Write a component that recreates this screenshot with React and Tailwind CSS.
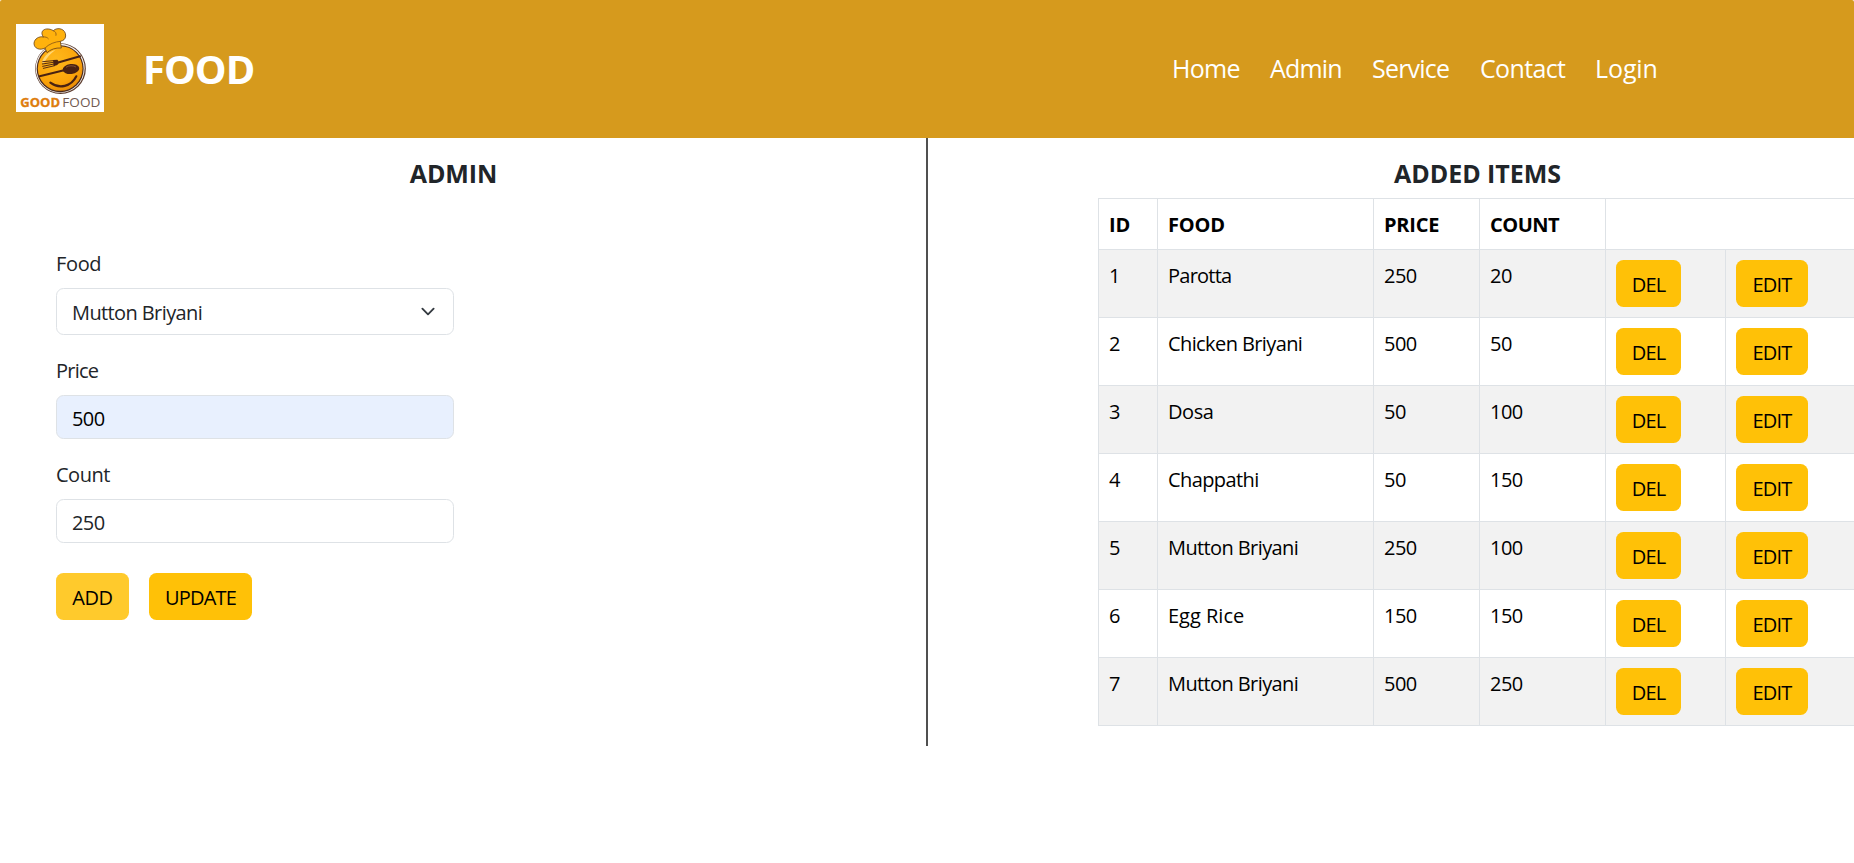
const navLinks = [
  { label: 'Home', box: 'w-[98px] tracking-[-0.7px]' },
  { label: 'Admin', box: 'w-[102px] tracking-[-0.8px]' },
  { label: 'Service', box: 'w-[108px] tracking-[-0.8px]' },
  { label: 'Contact', box: 'w-[115px] tracking-[-0.65px]' },
  { label: 'Login', box: 'w-[62px] tracking-[-0.1px]' },
];

const items = [
  { id: 1, food: 'Parotta', price: 250, count: 20, tracking: 'tracking-[-0.75px]' },
  { id: 2, food: 'Chicken Briyani', price: 500, count: 50, tracking: 'tracking-[-0.6px]' },
  { id: 3, food: 'Dosa', price: 50, count: 100, tracking: 'tracking-[-0.4px]' },
  { id: 4, food: 'Chappathi', price: 50, count: 150, tracking: 'tracking-[-0.6px]' },
  { id: 5, food: 'Mutton Briyani', price: 250, count: 100, tracking: 'tracking-[-0.6px]' },
  { id: 6, food: 'Egg Rice', price: 150, count: 150, tracking: 'tracking-normal' },
  { id: 7, food: 'Mutton Briyani', price: 500, count: 250, tracking: 'tracking-[-0.6px]' },
];

function Logo() {
  return (
    <svg viewBox="0 0 264 264" className="block h-[88px] w-[88px] shrink-0 bg-white">
      <defs>
        <radialGradient id="face" cx="0.4" cy="0.3" r="0.75">
          <stop offset="0" stopColor="#ffb81c" />
          <stop offset="0.7" stopColor="#fba40a" />
          <stop offset="1" stopColor="#e98a06" />
        </radialGradient>
      </defs>
      <circle cx="133.5" cy="134" r="76" fill="#5a3a2c" />
      <circle cx="132.5" cy="133" r="73.5" fill="#f3efec" />
      <circle cx="132.5" cy="134" r="70.5" fill="#4a2a1c" />
      <circle cx="132.5" cy="133.5" r="67" fill="url(#face)" />
      <path d="M78 116 C82 98 96 84 118 78 C104 88 92 100 84 118 Z" fill="#ffd775" />
      <path
        d="M93 86 L87 72 C72 80 54 74 54 58 C55 44 70 36 82 39 C68 18 92 8 112 20 C124 8 150 14 149 36 C148 46 142 50 133 52 L136 72 C118 71 104 76 93 86 Z"
        fill="#ffb20d"
        stroke="#6b4318"
        strokeWidth="2.5"
        strokeLinejoin="round"
      />
      <path
        d="M87 72 C98 60 118 53 133 52 M82 39 C88 38 94 40 97 44 M112 20 C118 22 122 28 120 34"
        fill="none"
        stroke="#8a5715"
        strokeWidth="2.5"
        strokeLinecap="round"
      />
      <g stroke="#4a2212" strokeLinecap="round" fill="none">
        <path d="M124 116 L192 97" strokeWidth="6" />
        <path d="M80 113 L112 110 M79 120 L112 115 M80 127 L114 120 M82 133 L116 125" strokeWidth="2.8" />
        <path d="M71 157 L144 139" strokeWidth="6" />
        <path d="M103 176 C130 196 166 188 181 157" strokeWidth="6.5" />
      </g>
      <path d="M111 108 L124 107 C130 112 129 120 122 124 L113 126 Z" fill="#4a2212" />
      <ellipse cx="165" cy="135" rx="25" ry="15" transform="rotate(-7 165 135)" fill="#4a2212" />
      <path d="M150 130 C158 124 172 124 180 129" fill="none" stroke="#8c5a3c" strokeWidth="2.5" />
      <text x="13" y="249" textLength="119" lengthAdjust="spacingAndGlyphs" fontFamily="'Open Sans', sans-serif" fontWeight="700" fontSize="39" fill="#de7d0d" stroke="#de7d0d" strokeWidth="1">
        GOOD
      </text>
      <text x="139" y="249" textLength="114" lengthAdjust="spacingAndGlyphs" fontFamily="'Open Sans', sans-serif" fontWeight="400" fontSize="39" fill="#715a50">
        FOOD
      </text>
    </svg>
  );
}

function Button({ className, children }) {
  return (
    <button
      type="button"
      className={`flex h-[47px] items-center justify-center rounded-[7.5px] pt-[3px] text-black ${className}`}
    >
      {children}
    </button>
  );
}

function Header() {
  return (
    <header className="flex h-[138px] items-center rounded-t-[2px] bg-[#d69a1d] text-white">
      <div className="flex w-[1172px] items-center pl-4">
        <div className="pb-0.5">
          <Logo />
        </div>
        <span className="ml-[39px] text-[40px] leading-[50px] font-bold tracking-[-1px]">FOOD</span>
      </div>
      <nav className="flex pb-0.5 text-[25px] leading-[38px]">
        {navLinks.map((link) => (
          <a key={link.label} className={link.box}>
            {link.label}
          </a>
        ))}
      </nav>
    </header>
  );
}

const fieldBox = 'flex items-center rounded-[7.5px] border border-[#dee2e6] px-[15px]';
const labelText = 'h-[30px] pt-px leading-[30px]';

function AdminPanel() {
  return (
    <section className="w-[926px] pt-5">
      <h5 className="pr-[19px] text-center text-[25px] leading-[30px] font-bold tracking-[-0.1px]">ADMIN</h5>
      <form className="mt-[60px] ml-14 flex w-[398px] flex-col leading-[30px]">
        <label className={`${labelText} tracking-[-0.35px]`}>Food</label>
        <div className={`${fieldBox} mt-2.5 h-[47px] justify-between tracking-[-0.6px]`}>
          <span className="pt-[3px]">Mutton Briyani</span>
          <svg viewBox="0 0 16 16" className="mb-px h-[15px] w-5" fill="none" stroke="#343a40" strokeWidth="2" strokeLinecap="round" strokeLinejoin="round">
            <path d="m2 5 6 6 6-6" />
          </svg>
        </div>
        <label className={`${labelText} mt-5 tracking-[-0.75px]`}>Price</label>
        <div className={`${fieldBox} mt-2.5 h-11 bg-[#e8f0fe] pt-[3px] tracking-[-0.6px] text-black`}>500</div>
        <label className={`${labelText} mt-5 tracking-[-0.5px]`}>Count</label>
        <div className={`${fieldBox} mt-2.5 h-11 pt-[3px] tracking-[-0.6px]`}>250</div>
        <div className="mt-[30px] flex gap-5">
          <Button className="w-[73px] bg-[#ffca2c] tracking-[-0.4px]">ADD</Button>
          <Button className="w-[103px] bg-[#ffc107] tracking-[-0.85px]">UPDATE</Button>
        </div>
      </form>
    </section>
  );
}

const cell = 'border-t border-l border-[#dee2e6] p-0 pt-[11px] pl-2.5 align-top leading-[30px]';

function ItemsPanel() {
  return (
    <section className="flex-1 pt-5 pl-[170px]">
      <h5 className="pl-[3px] text-center text-[25px] leading-[30px] font-bold tracking-[-0.05px]">ADDED ITEMS</h5>
      <table className="mt-2.5 w-[756px] table-fixed border-separate border-spacing-0 border-b border-[#dee2e6] text-left text-black">
        <colgroup>
          <col className="w-[59px]" />
          <col className="w-[216px]" />
          <col className="w-[106px]" />
          <col className="w-[126px]" />
          <col className="w-[120px]" />
          <col className="w-[129px]" />
        </colgroup>
        <thead>
          <tr className="h-[51px] font-bold">
            <th className={cell}>ID</th>
            <th className={`${cell} tracking-[-0.2px]`}>FOOD</th>
            <th className={`${cell} tracking-[-0.2px]`}>PRICE</th>
            <th className={`${cell} tracking-[-0.5px]`}>COUNT</th>
            <th className={cell} colSpan={2} />
          </tr>
        </thead>
        <tbody>
          {items.map((item) => (
            <tr key={item.id} className="h-[68px] odd:bg-[#f2f2f2]">
              <td className={cell}>{item.id}</td>
              <td className={`${cell} ${item.tracking}`}>{item.food}</td>
              <td className={`${cell} tracking-[-0.5px]`}>{item.price}</td>
              <td className={`${cell} tracking-[-0.5px]`}>{item.count}</td>
              <td className="border-t border-l border-[#dee2e6] p-0 pt-2.5 pl-2.5 align-top">
                <Button className="w-[65px] bg-[#ffc107] tracking-[-0.9px]">DEL</Button>
              </td>
              <td className="border-t border-l border-[#dee2e6] p-0 pt-2.5 pl-2.5 align-top">
                <Button className="w-[72px] bg-[#ffc107] tracking-[-0.8px]">EDIT</Button>
              </td>
            </tr>
          ))}
        </tbody>
      </table>
    </section>
  );
}

export default function App() {
  return (
    <div className="min-h-[863px] w-[1854px] overflow-hidden bg-white font-['Open_Sans',sans-serif] text-[20px] text-[#212529]">
      <Header />
      <main className="flex h-[608px]">
        <AdminPanel />
        <div className="w-0.5 bg-[#505050]" />
        <ItemsPanel />
      </main>
    </div>
  );
}
